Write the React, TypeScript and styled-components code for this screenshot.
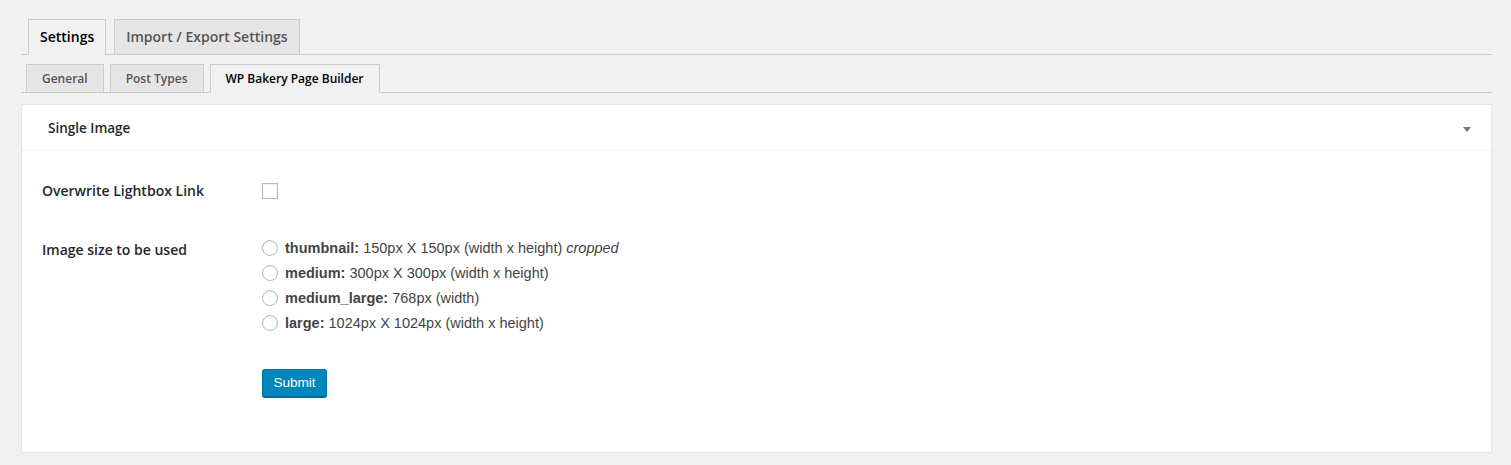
import React from "react";
import styled, { createGlobalStyle } from "styled-components";

const GlobalStyle = createGlobalStyle`
  html, body {
    margin: 0;
    padding: 0;
    background: #f1f1f1;
    font-family: "Open Sans", "Liberation Sans", sans-serif;
    color: #23282d;
  }
`;

const Wrap = styled.div`
  padding: 19px 19px 0 21px;
`;

const TabBar = styled.nav<{ $small?: boolean }>`
  display: flex;
  align-items: flex-end;
  gap: ${(p) => (p.$small ? "6px" : "8px")};
  padding-left: ${(p) => (p.$small ? "5px" : "7px")};
  border-bottom: 1px solid #ccc;
  margin-top: ${(p) => (p.$small ? "9px" : "0")};
`;

const Tab = styled.a<{ $active?: boolean; $small?: boolean }>`
  display: block;
  margin-bottom: -1px;
  border: 1px solid #ccc;
  border-bottom-color: ${(p) => (p.$active ? "#f1f1f1" : "#ccc")};
  background: ${(p) => (p.$active ? "#f1f1f1" : "#e5e5e5")};
  color: ${(p) => (p.$active ? "#000" : "#555")};
  font-weight: 600;
  font-size: ${(p) => (p.$small ? "12px" : "14px")};
  line-height: ${(p) => (p.$small ? "19px" : "24px")};
  padding: ${(p) => (p.$small ? "4px 15px" : "5px 11px")};
  text-decoration: none;
  white-space: nowrap;
`;

const Panel = styled.section`
  margin-top: 11px;
  background: #fff;
  border: 1px solid #e5e5e5;
  box-shadow: 0 1px 1px rgba(0, 0, 0, 0.04);
`;

const PanelHeader = styled.header`
  display: flex;
  align-items: center;
  justify-content: space-between;
  height: 45px;
  padding: 0 20px 0 26px;
  border-bottom: 1px solid #eee;
`;

const PanelTitle = styled.h2`
  margin: 0;
  font-size: 13.5px;
  line-height: 20px;
  font-weight: 600;
  color: #23282d;
`;

const Arrow = styled.span`
  width: 0;
  height: 0;
  margin-top: 3px;
  border-left: 4px solid transparent;
  border-right: 4px solid transparent;
  border-top: 5px solid #72777c;
`;

const PanelBody = styled.div`
  display: grid;
  grid-template-columns: 220px 1fr;
  padding: 30px 20px 55px 20px;
  row-gap: 35px;
`;

const Label = styled.div<{ $offset?: number }>`
  font-size: 14px;
  line-height: 20px;
  font-weight: 600;
  color: #23282d;
  padding-top: ${(p) => p.$offset ?? 0}px;
`;

const Field = styled.div`
  display: flex;
  align-items: center;
  height: 20px;
`;

const Checkbox = styled.span`
  box-sizing: border-box;
  width: 16px;
  height: 16px;
  border: 1px solid #b4b9be;
  background: #fff;
  box-shadow: inset 0 1px 2px rgba(0, 0, 0, 0.07);
`;

const RadioList = styled.div`
  display: flex;
  flex-direction: column;
  margin-top: -1px;
`;

const RadioRow = styled.label`
  display: flex;
  align-items: center;
  gap: 7px;
  height: 25px;
  font-family: "Liberation Sans", "Open Sans", sans-serif;
  font-size: 14.5px;
  color: #444;
  b {
    font-weight: 700;
    color: #444;
  }
  i {
    font-style: italic;
  }
`;

const Radio = styled.span`
  box-sizing: border-box;
  width: 16px;
  height: 16px;
  border-radius: 50%;
  border: 1px solid #b4b9be;
  background: #fff;
  box-shadow: inset 0 1px 2px rgba(0, 0, 0, 0.07);
  flex: none;
`;

const ButtonCell = styled.div`
  grid-column: 2;
  margin-top: -1px;
`;

const SubmitButton = styled.button`
  box-sizing: border-box;
  height: 28px;
  width: 65px;
  padding: 0 10px 1px;
  background: #0085ba;
  border: 1px solid #0073aa;
  border-bottom-color: #006799;
  box-shadow: 0 1px 0 #006799;
  border-radius: 3px;
  color: #fff;
  font-family: "Liberation Sans", "Open Sans", sans-serif;
  font-size: 13.5px;
  line-height: 26px;
  cursor: pointer;
`;

const sizes = [
  { name: "thumbnail", desc: "150px X 150px (width x height)", extra: "cropped" },
  { name: "medium", desc: "300px X 300px (width x height)" },
  { name: "medium_large", desc: "768px (width)" },
  { name: "large", desc: "1024px X 1024px (width x height)" },
];

export default function App() {
  return (
    <Wrap>
      <GlobalStyle />
      <TabBar>
        <Tab $active>Settings</Tab>
        <Tab>Import / Export Settings</Tab>
      </TabBar>
      <TabBar $small>
        <Tab $small>General</Tab>
        <Tab $small>Post Types</Tab>
        <Tab $small $active>WP Bakery Page Builder</Tab>
      </TabBar>
      <Panel>
        <PanelHeader>
          <PanelTitle>Single Image</PanelTitle>
          <Arrow />
        </PanelHeader>
        <PanelBody>
          <Label>Overwrite Lightbox Link</Label>
          <Field>
            <Checkbox />
          </Field>
          <Label $offset={4}>Image size to be used</Label>
          <RadioList>
            {sizes.map((s) => (
              <RadioRow key={s.name}>
                <Radio />
                <span>
                  <b>{s.name}:</b> {s.desc}
                  {s.extra ? (
                    <>
                      {" "}
                      <i>{s.extra}</i>
                    </>
                  ) : null}
                </span>
              </RadioRow>
            ))}
          </RadioList>
          <ButtonCell>
            <SubmitButton>Submit</SubmitButton>
          </ButtonCell>
        </PanelBody>
      </Panel>
    </Wrap>
  );
}
